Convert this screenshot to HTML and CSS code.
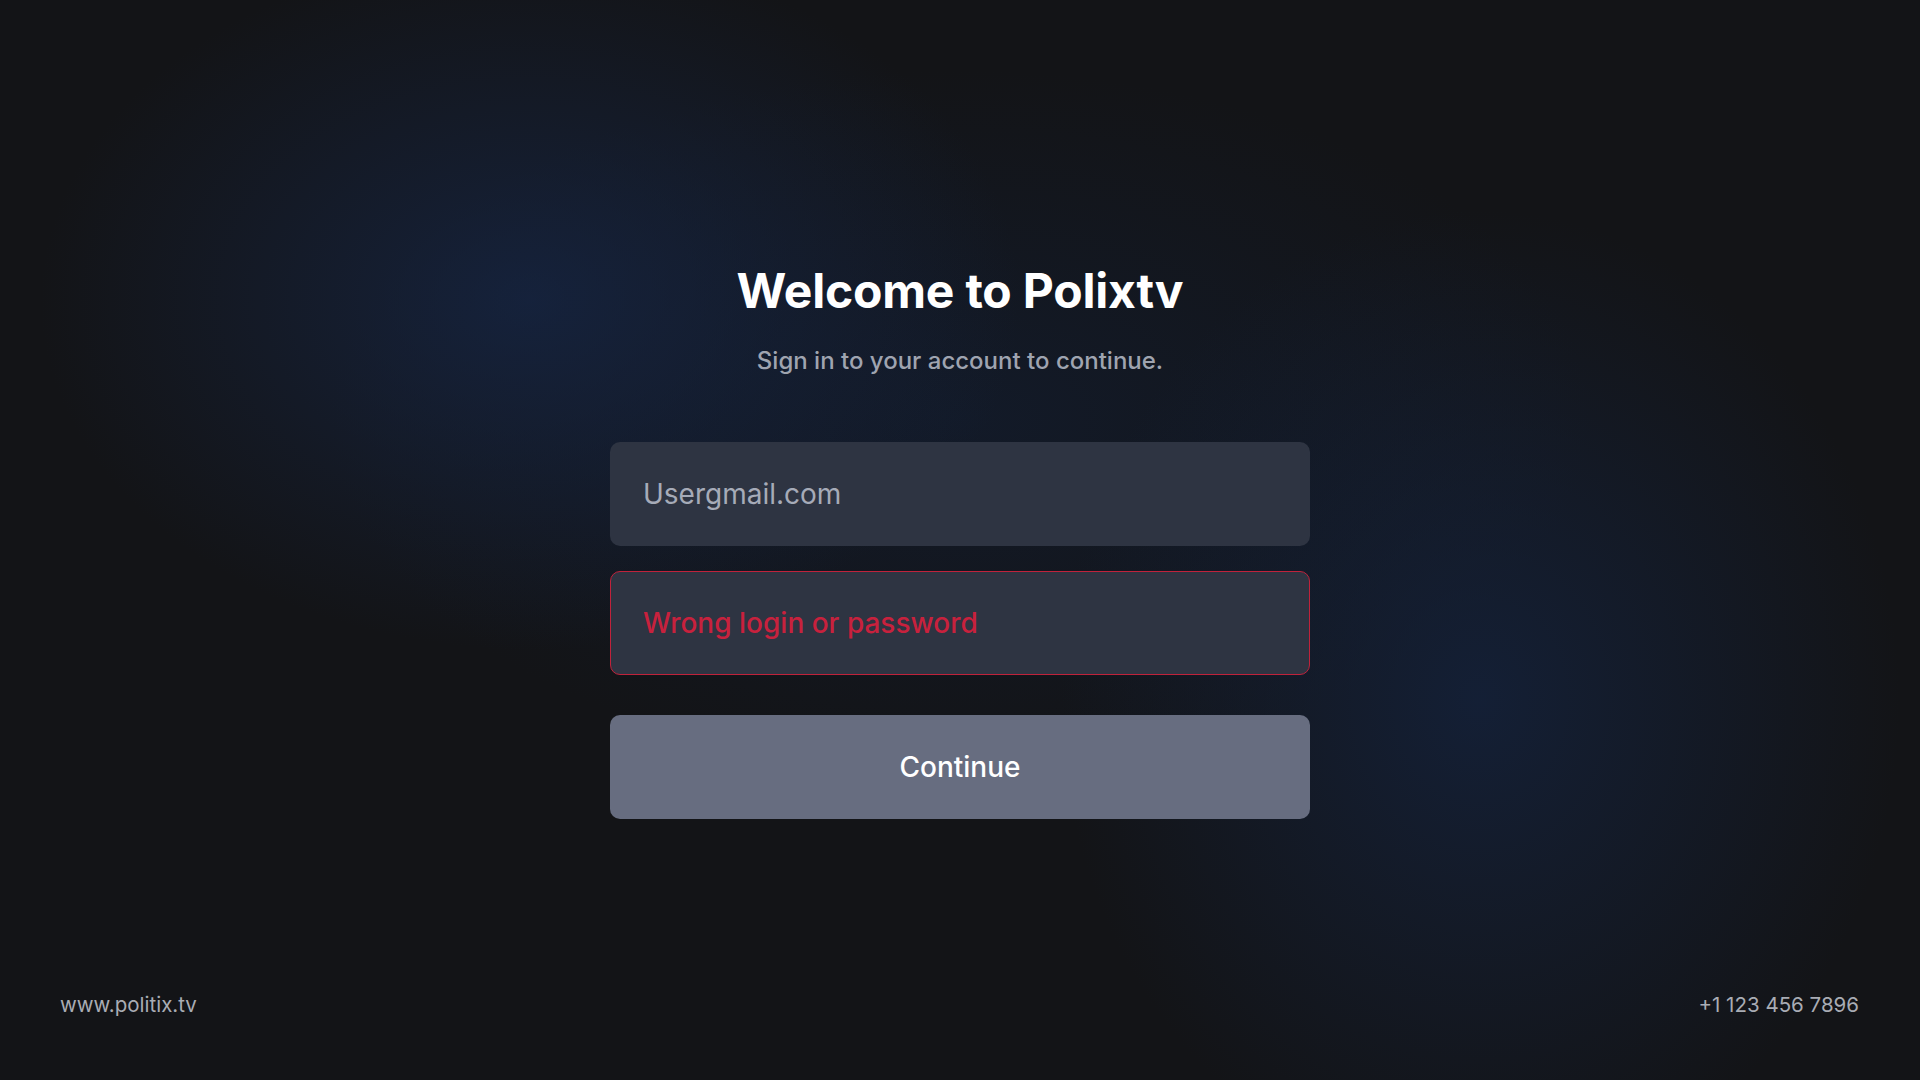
FILE: index.html
```html
<!DOCTYPE html>
<html lang="en">
<head>
<meta charset="utf-8">
<title>Polixtv — Sign in</title>
<link rel="stylesheet" href="styles.css">
</head>
<body>
<div class="page">
  <main class="signin">
    <h1 class="title">Welcome to Polixtv</h1>
    <p class="subtitle">Sign in to your account to continue.</p>
    <form class="form">
      <div class="field"><span class="field-text">Usergmail.com</span></div>
      <div class="field field-error"><span class="field-text error-text">Wrong login or password</span></div>
      <button type="button" class="btn">Continue</button>
    </form>
  </main>
  <footer class="footer">
    <span class="foot-text">www.politix.tv</span>
    <span class="foot-text">+1 123 456 7896</span>
  </footer>
</div>
</body>
</html>
```

FILE: styles.css
```css
* { box-sizing: border-box; }
html, body { margin: 0; padding: 0; height: 100%; }
body {
  font-family: Inter, "Noto Sans", sans-serif;
  background-color: #131417;
  background-image:
    radial-gradient(ellipse 700px 500px at 530px 300px, rgba(22,38,70,0.75), rgba(22,38,70,0) 70%),
    radial-gradient(ellipse 600px 700px at 1480px 700px, rgba(20,36,66,0.7), rgba(20,36,66,0) 70%),
    radial-gradient(ellipse 900px 500px at 960px 420px, rgba(18,30,52,0.6), rgba(18,30,52,0) 70%);
  color: #fff;
}
.page {
  width: 1920px;
  height: 1080px;
  display: flex;
  flex-direction: column;
  justify-content: space-between;
}
.signin {
  display: flex;
  flex-direction: column;
  align-items: center;
  padding-top: 258px;
}
.title {
  margin: 0;
  font-size: 48px;
  line-height: 66px;
  font-weight: 700;
  color: #ffffff;
  letter-spacing: -0.2px;
}
.subtitle {
  margin: 22px 0 0;
  font-size: 24px;
  line-height: 30px;
  font-weight: 500;
  color: #9fa4b0;
}
.form {
  margin-top: 66px;
  width: 700px;
  display: flex;
  flex-direction: column;
}
.field {
  height: 104px;
  border-radius: 10px;
  background: #2e3442;
  display: flex;
  align-items: center;
  padding: 0 32px;
  border: 1px solid transparent;
}
.field + .field { margin-top: 25px; }
.field-error { border-color: #c0223b; }
.field-text {
  font-size: 28px;
  color: #a6abb8;
}
.error-text { color: #c8213d; font-weight: 500; }
.btn {
  margin-top: 40px;
  height: 104px;
  border: none;
  border-radius: 10px;
  background: #676d80;
  color: #ffffff;
  font-family: Inter, "Noto Sans", sans-serif;
  font-size: 28px;
  font-weight: 500;
}
.footer {
  display: flex;
  justify-content: space-between;
  padding: 0 61px 60px 60px;
}
.foot-text {
  font-size: 20.5px;
  color: #a9acb4;
  line-height: 30px;
}
```
